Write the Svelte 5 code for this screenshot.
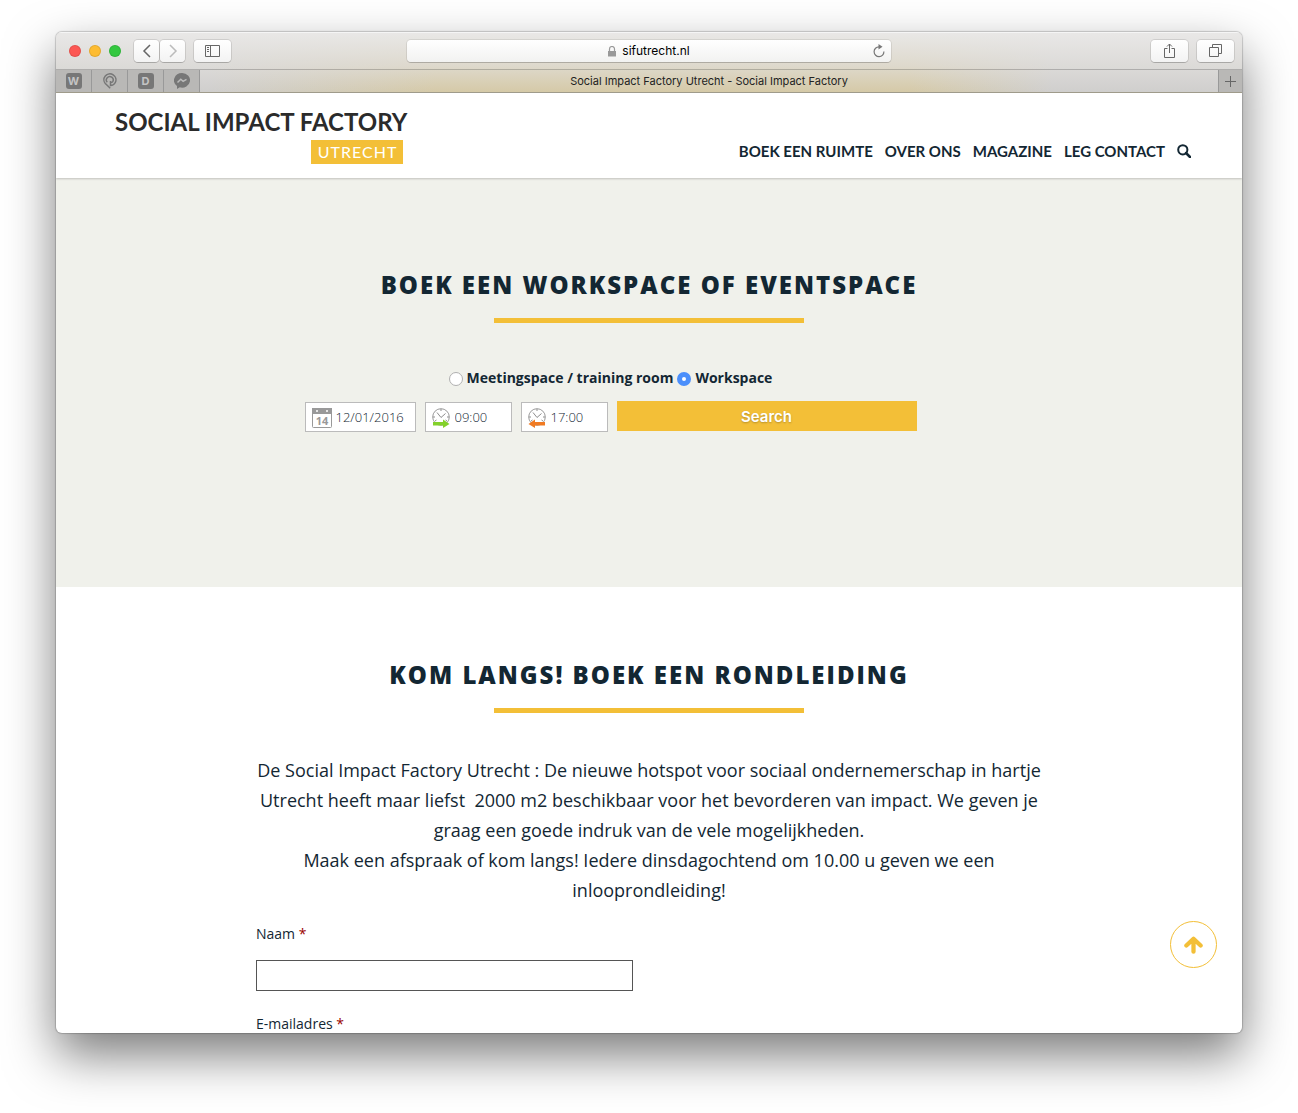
<script>
  let space = $state('work');
  let date = $state('12/01/2016');
  let from = $state('09:00');
  let until = $state('17:00');
  let name = $state('');
  let email = $state('');
  const links = ['Boek een ruimte', 'Over ons', 'Magazine', 'Leg contact'];
</script>

{#snippet clock()}
  <circle cx="9" cy="9" r="8.3" fill="#fff" stroke="#9a9a9a" />
  <path d="M5 4.5 9 9.5l4.5-4M9 1v2M1 9h2M15 9h2M3 13l1.500-1M15 13l-1.500-1" fill="none" stroke="#8d8d8d" />
{/snippet}

<div class="desktop">
  <div class="window">
    <div class="chrome">
      <div class="toolbar">
        <div class="side">
          <div class="lights"><i class="red"></i><i class="amber"></i><i class="green"></i></div>
          <div class="history">
            <button aria-label="Back"><svg width="10" height="14" viewBox="0 0 10 14"><path d="M8 1 2 7l6 6" fill="none" stroke="#666" stroke-width="1.5" /></svg></button>
            <button aria-label="Forward"><svg width="10" height="14" viewBox="0 0 10 14"><path d="m2 1 6 6-6 6" fill="none" stroke="#bbb" stroke-width="1.5" /></svg></button>
          </div>
          <button class="wide" aria-label="Sidebar">
            <svg width="15" height="12" viewBox="0 0 15 12"><path d="M.5.5h14v11H.5zM5.500.5v11M2 2.500h2M2 4.500h2M2 6.500h2" fill="none" stroke="#666" /></svg>
          </button>
        </div>
        <div class="address">
          <span></span>
          <span class="url">
            <svg width="8" height="11" viewBox="0 0 8 11"><path d="M0 5h8v5.500H0z" fill="#999" /><path d="M1.500 5V3a2.500 2.500 0 0 1 5 0v2" fill="none" stroke="#999" stroke-width="1.200" /></svg>
            sifutrecht.nl
          </span>
          <button class="reload" aria-label="Reload">
            <svg width="12" height="14" viewBox="0 0 12 14"><path d="M6 2.800a4.900 4.900 0 1 0 4.900 4.700" fill="none" stroke="#777" stroke-width="1.200" /><path d="m5.500 0 4 2.800-4 2.700z" fill="#777" /></svg>
          </button>
        </div>
        <div class="side end">
          <button class="wide" aria-label="Share">
            <svg width="11" height="16" viewBox="0 0 11 16"><path d="M3.500 5.500h-3v9h10v-9h-3M5.500 10V1M3 3.500 5.500 1 8 3.500" fill="none" stroke="#666" /></svg>
          </button>
          <button class="wide" aria-label="Show tabs">
            <svg width="13" height="13" viewBox="0 0 13 13"><path d="M.5 3.500h9v9h-9zM3.500 3V.5h9v9H10" fill="none" stroke="#666" /></svg>
          </button>
        </div>
      </div>
      <div class="tabs">
        <button class="pin" aria-label="W"><span class="tile">W</span></button>
        <button class="pin" aria-label="Pinned map">
          <svg width="14" height="16" viewBox="0 0 14 16"><path d="M2.600 11A6 6 0 1 1 12.300 9.500C11 12 8.500 12.500 7.500 12.500V8M4.300 9.300A3.400 3.400 0 1 1 9.700 8.700C9 9.500 8 9.500 7.500 9.500M2.600 10.800l4.600 4.500" fill="none" stroke="#777" stroke-width="1.500" /></svg>
        </button>
        <button class="pin" aria-label="D"><span class="tile">D</span></button>
        <button class="pin" aria-label="Messenger">
          <svg width="16" height="16" viewBox="0 0 16 16"><path d="M8 0a8 7.300 0 1 1-2.200 14.300L3 16v-3A8 7.300 0 0 1 8 0z" fill="#777" /><path d="m3.500 9.500 3.300-3.200 2.300 2 3.400-2" fill="none" stroke="#bbb" stroke-width="1.500" /></svg>
        </button>
        <span class="tab">Social Impact Factory Utrecht - Social Impact Factory</span>
        <button class="pin new" aria-label="New tab"><svg width="11" height="11" viewBox="0 0 11 11"><path d="M5.500 0v11M0 5.500h11" stroke="#666" /></svg></button>
      </div>
    </div>

    <div class="site">
      <header>
        <a class="logo" href="#home"><strong>SOCIAL IMPACT FACTORY</strong><em>UTRECHT</em></a>
        <nav>
          {#each links as link}<a href="#{link}">{link}</a>{/each}
          <a href="#search" aria-label="Zoeken">
            <svg width="14" height="14" viewBox="0 0 14 14"><circle cx="5.800" cy="5.800" r="4.600" fill="none" stroke="#132733" stroke-width="2" /><path d="m9 9 4 4" stroke="#132733" stroke-width="2.500" stroke-linecap="round" /></svg>
          </a>
        </nav>
      </header>

      <section class="hero">
        <h2>Boek een workspace of eventspace</h2>
        <form class="booking">
          <div class="radios">
            <label><input type="radio" value="meeting" bind:group={space} />Meetingspace / training room</label>
            <label><input type="radio" value="work" bind:group={space} />Workspace</label>
          </div>
          <div class="fields">
            <label class="field date">
              <svg width="20" height="20" viewBox="0 0 20 20"><rect x=".5" y=".5" width="19" height="19" rx="1" fill="#fff" stroke="#999" /><path d="M0 0h20v6H0z" fill="#999" /><circle cx="5" cy="3" r="1" fill="#fff" /><circle cx="15" cy="3" r="1" fill="#fff" /><text x="10" y="17" text-anchor="middle">14</text></svg>
              <input aria-label="Datum" bind:value={date} />
            </label>
            <label class="field">
              <svg width="18" height="20" viewBox="0 0 18 20">{@render clock()}<path d="M1 14h10v-2.500l6.500 4.500-6.500 4v-2.500H1z" fill="#83d12a" /></svg>
              <input aria-label="Van" bind:value={from} />
            </label>
            <label class="field">
              <svg width="18" height="20" viewBox="0 0 18 20">{@render clock()}<path d="M17 14H7v-2.500L.5 16 7 20v-2.500h10z" fill="#f07a22" /></svg>
              <input aria-label="Tot" bind:value={until} />
            </label>
            <button type="button" class="search">Search</button>
          </div>
        </form>
      </section>

      <section class="visit">
        <h2>Kom langs! Boek een rondleiding</h2>
        <p>
          De Social Impact Factory Utrecht : De nieuwe hotspot voor sociaal ondernemerschap in hartje Utrecht heeft maar liefst &nbsp;2000 m2 beschikbaar voor het bevorderen van impact. We geven je graag een goede indruk van de vele mogelijkheden.<br />
          Maak een afspraak of kom langs! Iedere dinsdagochtend om 10.00 u geven we een inlooprondleiding!
        </p>
        <form class="contact">
          <label for="name">Naam <b>*</b></label>
          <input id="name" bind:value={name} />
          <label for="email">E-mailadres <b>*</b></label>
          <input id="email" type="email" bind:value={email} />
        </form>
      </section>
    </div>

    <a class="top" href="#home" aria-label="Naar boven">
      <svg width="19" height="18" viewBox="0 0 20 18"><path d="M10 16V3M2.500 9.500 10 2.500l7.500 7" fill="none" stroke="#f3bf37" stroke-width="4.500" stroke-linecap="round" stroke-linejoin="round" /></svg>
    </a>
  </div>
</div>

<style>
  :global(body) { margin: 0; background: #fff; }
  * { box-sizing: border-box; }
  .desktop {
    height: 100vh;
    padding: 32px 56px 80px;
    overflow: hidden;
    font-family: "Open Sans", sans-serif;
    color: #132733;
  }
  .window {
    position: relative;
    display: flex;
    flex-direction: column;
    height: 100%;
    border-radius: 6px;
    overflow: hidden;
    background: #fff;
    box-shadow: 0 0 1px 1px rgba(0, 0, 0, .18), 0 22px 50px rgba(0, 0, 0, .52);
  }
  button { padding: 0; font: inherit; }
  svg { display: block; flex: none; }

  .chrome {
    flex: none;
    font-family: Inter, sans-serif;
    background:
      linear-gradient(180deg, #e9e8e7, rgba(226, 224, 221, .7) 55%, rgba(226, 224, 221, 0)),
      linear-gradient(90deg, #cfcecd 13%, #d5c9a6 32%, #d5c9a6 72%, #cfcecd 84%);
  }
  .toolbar {
    display: grid;
    grid-template-columns: 1fr 484px 1fr;
    align-items: center;
    height: 38px;
    padding: 0 8px;
    border-bottom: 1px solid rgba(0, 0, 0, .2);
    box-shadow: inset 0 1px #f5f5f5;
  }
  .side { display: flex; align-items: center; gap: 9px; }
  .end { justify-content: flex-end; }
  .lights { display: flex; gap: 8px; padding: 0 4px 0 5px; }
  .lights i { width: 12px; height: 12px; border-radius: 50%; box-shadow: inset 0 0 0 1px rgba(0, 0, 0, .1); }
  .red { background: #fc5753; }
  .amber { background: #fdbc32; }
  .green { background: #34c840; }
  .history { display: flex; gap: 1px; }
  .toolbar button {
    display: grid;
    place-items: center;
    width: 25px;
    height: 22px;
    border: 0;
    border-radius: 4px;
    background: linear-gradient(#fff, #f3f3f3);
    box-shadow: 0 0 0 1px rgba(0, 0, 0, .1), 0 1px rgba(0, 0, 0, .15);
  }
  .toolbar .wide { width: 37px; }
  .address {
    display: grid;
    grid-template-columns: 20px 1fr 20px;
    align-items: center;
    height: 22px;
    border-radius: 4px;
    background: linear-gradient(#fff, #f2f2f1);
    box-shadow: 0 0 0 1px rgba(0, 0, 0, .08), 0 1px rgba(0, 0, 0, .15);
    font-size: 12px;
    line-height: 16px;
    color: #000;
  }
  .url { display: flex; justify-content: center; align-items: center; gap: 6px; padding-top: 1px; }
  .toolbar .reload { width: 16px; background: none; box-shadow: none; }
  .tabs { display: flex; height: 23px; border-bottom: 1px solid #9f9b8b; }
  .pin {
    display: grid;
    place-items: center;
    width: 36px;
    border: 0;
    border-right: 1px solid #999;
    background: #b9b8b6;
  }
  .new { width: 24px; border-right: 0; border-left: 1px solid #999; }
  .tile {
    width: 16px;
    border-radius: 3px;
    background: #777;
    color: #c4c4c4;
    font-size: 11px;
    line-height: 16px;
    font-weight: 700;
  }
  .tab { flex: 1; text-align: center; font-size: 11px; line-height: 23px; color: #222; }

  .site { flex: 1; min-height: 0; overflow: hidden; }
  header {
    position: relative;
    display: flex;
    justify-content: space-between;
    align-items: flex-end;
    padding: 14px 51px 14px 59px;
    box-shadow: 0 1px 2px rgba(0, 0, 0, .2);
    font-family: Lato, sans-serif;
  }
  .logo { display: flex; flex-direction: column; color: #2b2b2b; text-decoration: none; }
  .logo strong { font-size: 24px; line-height: 30px; font-weight: 700; }
  .logo em {
    align-self: flex-end;
    margin: 3px 4px 0 0;
    padding: 0 6px 0 7px;
    background: #f3bf37;
    color: #fff;
    font-size: 16px;
    line-height: 24px;
    font-style: normal;
    letter-spacing: 1px;
  }
  nav { display: flex; align-items: center; gap: 12px; }
  nav a { color: #132733; font-size: 15px; line-height: 26px; font-weight: 700; text-decoration: none; text-transform: uppercase; }

  h2 {
    display: flex;
    flex-direction: column;
    align-items: center;
    gap: 18px;
    margin: 0;
    font-size: 24px;
    line-height: 30px;
    font-weight: 800;
    letter-spacing: 2px;
    text-transform: uppercase;
  }
  h2::after { content: ""; width: 310px; height: 5px; background: #f3bf37; }
  .hero { padding: 92px 200px 155px; background: #f0f1eb; }
  .booking { display: flex; flex-direction: column; align-items: center; gap: 13px; margin-top: 45px; padding-right: 77px; }
  .radios { display: flex; gap: 4px; font-size: 14px; line-height: 20px; font-weight: 700; }
  .radios label { display: flex; align-items: center; gap: 4px; }
  .radios input {
    appearance: none;
    width: 14px;
    height: 14px;
    margin: 2px 0 0;
    border: 1px solid #b0b0b0;
    border-radius: 50%;
    background: #fff;
  }
  .radios input:checked { border: 5px solid #4b8ffb; }
  .fields { display: flex; gap: 9px; }
  .field {
    display: flex;
    align-items: center;
    gap: 5px;
    width: 87px;
    height: 30px;
    margin-top: 1px;
    padding: 2px 6px 0;
    border: 1px solid #bbb;
    background: #fff;
  }
  .date { width: 111px; gap: 4px; }
  .field input {
    flex: 1;
    min-width: 0;
    height: 24px;
    margin-bottom: 2px;
    padding: 0;
    border: 0;
    background: none;
    font: 300 13px/24px "Open Sans", sans-serif;
    color: #132733;
  }
  .field text { font: 700 11px "Open Sans", sans-serif; fill: #999; }
  .search {
    width: 300px;
    height: 30px;
    border: 0;
    background: #f3bf37;
    color: #fff;
    font: 600 15px Inter, sans-serif;
    text-shadow: 0 1px 2px rgba(0, 0, 0, .25);
  }

  .visit { padding: 73px 200px 0; }
  p { margin: 42px 0 0; font-size: 18px; line-height: 30px; text-align: center; }
  .contact { display: flex; flex-direction: column; align-items: flex-start; margin-top: 19px; font-size: 14px; line-height: 20px; }
  .contact b { color: #900; font-weight: 400; }
  .contact input { width: 377px; height: 31px; margin: 16px 0 23px; padding: 4px 8px; border: 1px solid #555; background: #fff; font: inherit; }

  .top {
    position: absolute;
    right: 25px;
    bottom: 65px;
    display: grid;
    place-items: center;
    width: 47px;
    height: 47px;
    border: 1px solid #f3bf37;
    border-radius: 50%;
  }
</style>
